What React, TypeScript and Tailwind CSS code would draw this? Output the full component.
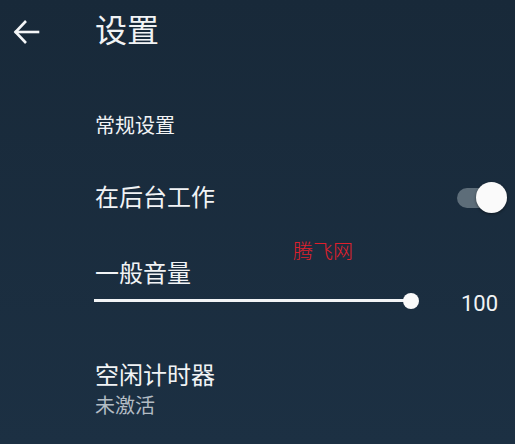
import React from "react";

function BackArrow() {
  return (
    <svg width="28" height="28" viewBox="0 0 28 28" fill="none" stroke="#f4f6f8" strokeWidth="2.6" strokeLinecap="square">
      <path d="M26 14H4" />
      <path d="M14 3L3.5 14L14 25" strokeLinecap="butt" />
    </svg>
  );
}

function Toggle() {
  return (
    <div className="relative w-[50px] h-[32px]">
      <div className="absolute left-0 top-[6px] w-[44px] h-[20px] rounded-full bg-[#5d6d79]" />
      <div className="absolute right-0 top-0 w-[31px] h-[31px] rounded-full bg-[#fafafa] shadow-[0_1px_3px_rgba(0,0,0,0.45)]" />
    </div>
  );
}

function VolumeSlider() {
  return (
    <div className="relative w-[325px] h-[18px]">
      <div className="absolute left-0 right-[8px] top-[7px] h-[3px] bg-[#f2f4f6]" />
      <div className="absolute right-0 top-[1px] w-[16px] h-[16px] rounded-full bg-[#fafafa]" />
    </div>
  );
}

export default function App() {
  return (
    <div
      className="relative w-[515px] h-[444px] overflow-hidden bg-linear-to-b from-[#182939] to-[#1c3043] text-[#f1f3f5]"
      style={{ fontFamily: 'Roboto, "Noto Sans CJK SC", sans-serif' }}
    >
      {/* top bar */}
      <div className="flex items-center h-[64px]">
        <div className="w-[95px] pl-[12px] flex items-center">
          <BackArrow />
        </div>
        <div className="text-[32px] leading-none -mt-[2px]">设置</div>
      </div>

      <div className="pl-[95px]">
        <div className="mt-[52px] text-[20px] leading-none">常规设置</div>

        <div className="mt-[46px] flex items-center justify-between pr-[8px]">
          <div className="text-[24px] leading-none">在后台工作</div>
          <Toggle />
        </div>

        <div className="mt-[48px] text-[24px] leading-none">一般音量</div>
        <div className="mt-[4px] flex items-center justify-between pr-[17px] -ml-px">
          <VolumeSlider />
          <div className="text-[22px] leading-none translate-y-[3px]">100</div>
        </div>

        <div className="mt-[52px] text-[24px] leading-none">空闲计时器</div>
        <div className="mt-[8px] text-[20px] leading-none text-[#b3bcc4]">未激活</div>
      </div>

      <div className="absolute left-[293px] top-[242px] text-[20px] leading-none text-[#e0202c] font-light">
        腾飞网
      </div>
    </div>
  );
}
